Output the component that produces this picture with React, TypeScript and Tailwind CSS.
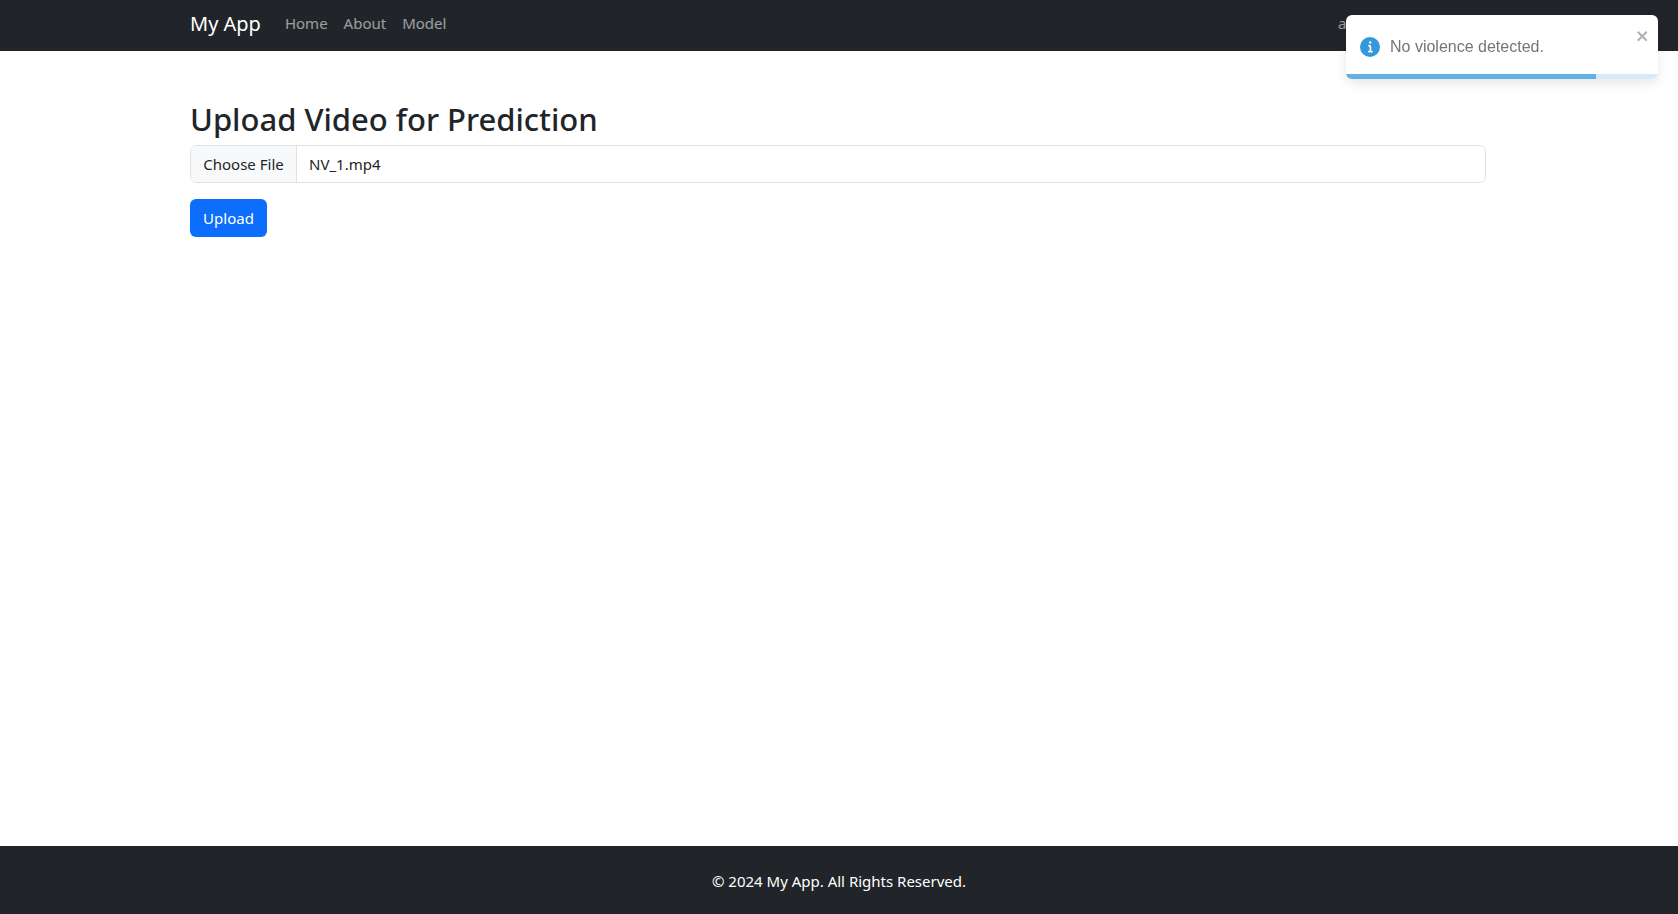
import { useEffect, useRef } from "react";

const links = ["Home", "About", "Model"];

function Navbar() {
  return (
    <header className="bg-[#212529]">
      <nav className="mx-auto flex h-[51px] w-full max-w-[1320px] items-center pr-[13px] pb-1 pl-[11px]">
        <a href="#" className="mr-6 text-xl leading-[30px] text-white">
          My App
        </a>
        <ul className="flex gap-4 pb-0.5 text-[15px] leading-6 text-white/55">
          {links.map((label) => (
            <li key={label}>
              <a href="#">{label}</a>
            </li>
          ))}
        </ul>
        <span className="ml-auto w-[148px] pb-0.5 text-[15px] leading-6 text-white/55">a</span>
      </nav>
    </header>
  );
}

function UploadForm() {
  const input = useRef<HTMLInputElement>(null);

  useEffect(() => {
    if (!input.current) return;
    const transfer = new DataTransfer();
    transfer.items.add(new File([""], "NV_1.mp4", { type: "video/mp4" }));
    input.current.files = transfer.files;
  }, []);

  return (
    <form onSubmit={(e) => e.preventDefault()}>
      <h2 className="mb-1.5 text-[31px] leading-10 font-medium">
        <label htmlFor="video">Upload Video for Prediction</label>
      </h2>
      <input
        ref={input}
        id="video"
        type="file"
        accept="video/*"
        className="mb-4 block h-[38px] w-full overflow-hidden rounded-md border border-[#dee2e6] bg-white text-[15px] leading-9 file:mr-3 file:h-9 file:w-[106px] file:rounded-none file:border-0 file:border-r file:border-solid file:border-[#dee2e6] file:bg-[#f8f9fa] file:p-0 file:text-center file:text-[15px] file:text-[#212529]"
      />
      <button
        type="submit"
        className="block h-[38px] w-[77px] rounded-md bg-[#0d6efd] text-center text-[15px] leading-6 text-white"
      >
        Upload
      </button>
    </form>
  );
}

function Toast() {
  return (
    <div
      role="alert"
      className="fixed top-[15px] right-5 flex h-16 w-[312px] items-center overflow-hidden rounded-md bg-white px-[14px] font-['Liberation_Sans',Arial,sans-serif] text-[#757575] shadow-[0_4px_12px_rgba(0,0,0,0.1)]"
    >
      <svg viewBox="0 0 24 24" className="mr-[10px] size-5 shrink-0 fill-[#3498db]" aria-hidden="true">
        <path d="M12 0a12 12 0 1012 12A12.013 12.013 0 0012 0zm.25 5a1.5 1.5 0 11-1.5 1.5 1.5 1.5 0 011.5-1.5zm2.25 13.5h-4a1 1 0 010-2h.75a.25.25 0 00.25-.25v-4.5a.25.25 0 00-.25-.25h-.75a1 1 0 010-2h1a2 2 0 012 2v4.75a.25.25 0 00.25.25h.75a1 1 0 110 2z" />
      </svg>
      <p className="text-base leading-6">No violence detected.</p>
      <button type="button" aria-label="close" className="absolute top-[13px] right-2 opacity-30">
        <svg viewBox="0 0 14 16" className="h-4 w-[14px] fill-black" aria-hidden="true">
          <path
            fillRule="evenodd"
            d="M7.71 8.23l3.75 3.75-1.48 1.48-3.75-3.75-3.75 3.75L1 11.98l3.75-3.75L1 4.48 2.48 3l3.75 3.75L9.98 3l1.48 1.48-3.75 3.75z"
          />
        </svg>
      </button>
      <div className="absolute inset-x-0 bottom-0 h-[5px] bg-[#d6eaf8]">
        <div className="h-full w-[80%] bg-[#64b0e3]" />
      </div>
    </div>
  );
}

export default function App() {
  return (
    <div className="flex min-h-screen flex-col bg-white font-['Noto_Sans','Open_Sans',sans-serif] text-[#212529]">
      <Navbar />
      <main className="mx-auto w-full max-w-[1320px] flex-1 pt-12 pr-[13px] pl-[11px]">
        <UploadForm />
      </main>
      <footer className="bg-[#212529] pt-[23px] pb-[21px] text-center text-[15px] leading-6 text-white">
        © 2024 My App. All Rights Reserved.
      </footer>
      <Toast />
    </div>
  );
}
